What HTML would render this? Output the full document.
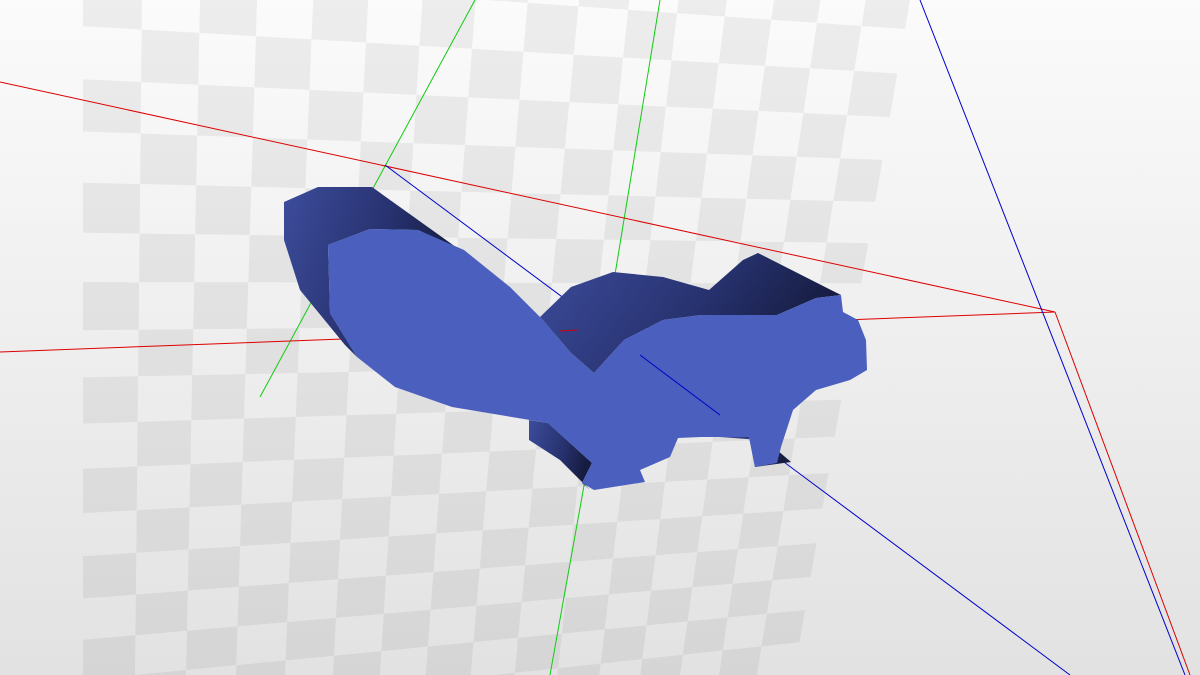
<!DOCTYPE html>
<html><head><meta charset="utf-8"><style>
html,body{margin:0;padding:0;width:1200px;height:675px;overflow:hidden}
svg{display:block}
</style></head><body>
<svg id="s" width="1200" height="675" viewBox="0 0 1200 675" xmlns="http://www.w3.org/2000/svg">
<defs>
<linearGradient id="bg" x1="0" y1="0" x2="0" y2="1">
<stop offset="0" stop-color="#fbfbfb"/><stop offset="1" stop-color="#e2e2e2"/>
</linearGradient>
<linearGradient id="dk" x1="0" y1="0" x2="1" y2="0.3">
<stop offset="0" stop-color="#3d4c9c"/><stop offset="0.6" stop-color="#27326f"/><stop offset="1" stop-color="#161c40"/>
</linearGradient>
</defs>
<rect width="1200" height="675" fill="url(#bg)"/>
<g id="chk" fill="#000" fill-opacity="0.055"></g>
<g fill="none" stroke-width="1">
<line x1="475" y1="0" x2="260" y2="397" stroke="#1c1"/>
<line x1="660" y1="0" x2="610" y2="305" stroke="#1c1"/>
<line x1="585" y1="480" x2="550" y2="675" stroke="#1c1"/>
<line x1="0" y1="82" x2="1055" y2="312" stroke="#d00"/>
<line x1="0" y1="352" x2="1055" y2="312" stroke="#d00"/>
<line x1="1055" y1="312" x2="1190" y2="675" stroke="#d00"/>
<line x1="920" y1="0" x2="1185" y2="675" stroke="#00c"/>
<line x1="385" y1="165" x2="1070" y2="675" stroke="#00c"/>
</g>
<g>
<polygon fill="url(#dk)" points="284,202 318,187 372,187 460,250 418,230 370,229 328,245 330,313 357,357 345,345 300,290 284,240"/>
<polygon fill="url(#dk)" points="540,317 571,287 613,272 663,277 709,290 743,260 758,253 831,290 841,295 816,298 777,315 701,315 663,320 624,340 594,373 571,353"/>
<polygon fill="url(#dk)" points="529,420 548,423 592,463 582,483 590,490 560,460 529,440"/>
<polygon fill="url(#dk)" points="720,437 749,437 755,467 791,462 777,450 760,440"/>
<polygon fill="#4a5fbe" points="328,245 370,229 418,230 464,250 510,287 540,317 571,353 594,373 624,340 663,320 701,315 777,315 816,298 841,295 843,312 858,320 866,340 867,370 850,380 816,390 793,410 781,447 777,463 755,467 749,437 701,437 678,438 670,457 640,470 645,482 594,490 582,483 592,463 548,423 452,407 395,387 357,357 330,313"/>
<line x1="560" y1="331" x2="578" y2="330" stroke="#c00"/>
<line x1="640" y1="355" x2="720" y2="415" stroke="#00c"/>
</g>
</svg>
<script>
(function(){
var P=[[83,-28],[905,29],[805,610],[83,680]];
function fa(u){return (57*u-0.5*u*u)/784;}
function fb(v){return (55*v-0.5*v*v)/712.5;}
function H(u,v){
 var a=fa(u),b=fb(v);
 var x=(1-a)*(1-b)*P[0][0]+a*(1-b)*P[1][0]+a*b*P[2][0]+(1-a)*b*P[3][0];
 var y=(1-a)*(1-b)*P[0][1]+a*(1-b)*P[1][1]+a*b*P[2][1]+(1-a)*b*P[3][1];
 return [x.toFixed(1),y.toFixed(1)];}
var g=document.getElementById('chk'),s='';
for(var u=0;u<16;u++)for(var v=-2;v<17;v++){
 if(((u+v)%2+2)%2!==0)continue;
 var A=H(u,v),B=H(u+1,v),C=H(u+1,v+1),D=H(u,v+1);
 s+='<polygon points="'+A+' '+B+' '+C+' '+D+'"/>';}
g.innerHTML=s;
})();
</script>
</body></html>
